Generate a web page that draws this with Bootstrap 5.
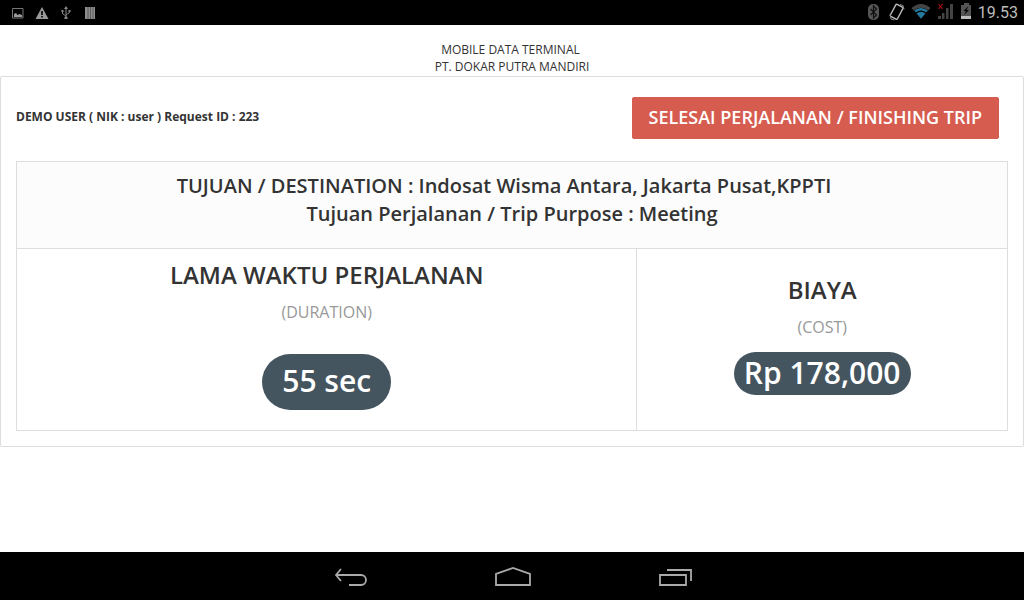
<!DOCTYPE html>
<html lang="id">
<head>
<meta charset="utf-8">
<meta name="viewport" content="width=device-width, initial-scale=1">
<title>Mobile Data Terminal</title>
<link href="https://cdn.jsdelivr.net/npm/bootstrap@5.3.0/dist/css/bootstrap.min.css" rel="stylesheet">
<style>
  body { font-family: "Open Sans", "Noto Sans", sans-serif; font-size: 12px; line-height: 17px; color: #333; }
  .status-bar { height: 25px; padding: 0 6px 0 10px; background: #000; }
  .clock { font-family: Roboto, sans-serif; font-size: 16px; line-height: 25px; color: #bdbdbd; }
  .nav-keys { height: 48px; padding: 4px 0 0 2px; background: #000; }
  .nav-keys .btn { width: 162px; }
  .terminal-title { padding-top: 16px; padding-bottom: 1px; }
  .trip-panel { border: 1px solid #ddd; border-radius: 2px; padding: 20px 15px 15px; }
  .trip-head { padding-right: 9px; margin-bottom: 22px; }
  .trip-head strong { padding-bottom: 4px; }
  .btn-finish { --bs-btn-color: #fff; --bs-btn-bg: #d65c4f; --bs-btn-border-color: #d65c4f; --bs-btn-hover-color: #fff; --bs-btn-hover-bg: #c94c3f; --bs-btn-hover-border-color: #c94c3f;
    font-size: 18px; line-height: 24px; font-weight: 600; padding: 7px 16px 9px; border-radius: 2px; }
  .trip-table { --bs-table-color: #333; border-color: #ddd; table-layout: fixed; }
  .trip-table > thead th { font-size: 20px; line-height: 28px; font-weight: 600; padding: 10px 8px 20px; background: #fcfcfc; }
  .trip-table > tbody td { padding: 8px 8px 20px; }
  .duration-col { width: 62.6%; }
  .trip-table h2 { font-size: 24px; line-height: 36px; font-weight: 600; margin: 0; }
  .caption-en { font-size: 16px; line-height: 24px; color: #999; margin: 7px 0 0; }
  .pill { display: inline-block; background: #455560; color: #fff; font-size: 30px; font-weight: 600; vertical-align: top; }
  .pill-lg { line-height: 36px; padding: 9px 20px 11px; margin-top: 30px; border-radius: 28px; }
  .pill-sm { line-height: 41px; padding: 0 10px 2px; margin-top: 13px; border-radius: 22px; }
</style>
</head>
<body class="d-flex flex-column min-vh-100 bg-white">
<header class="status-bar d-flex align-items-center justify-content-between">
  <div class="d-flex align-items-center gap-2">
    <svg width="16" height="16" viewBox="0 0 16 16" aria-hidden="true"><path d="M2.500 3.500h10.500v9.500H2.500z" fill="none" stroke="#777"/><path d="M4 9l2-1 1.500 2 2-1 2.500 1v2H4z" fill="#999"/></svg>
    <svg width="16" height="16" viewBox="0 0 16 16" aria-hidden="true"><path d="M8 2l6.500 12h-13z" fill="#999"/><path d="M7.200 6h1.600v4H7.200zM7.200 11h1.600v1.500H7.200z" fill="#000"/></svg>
    <svg width="16" height="16" viewBox="0 0 16 16" aria-hidden="true" fill="none" stroke="#888"><path d="M8 4v9M4.500 6v2c0 2 3.500 1.500 3.500 4M11.500 6v1c0 2-3.500 1.500-3.500 3.500"/><path d="M8 1l2 3H6zM3.500 5h2v2h-2zM10.500 5h2v2h-2zM6.500 12h3v2h-3z" fill="#888" stroke="none"/></svg>
    <svg width="16" height="16" viewBox="0 0 16 16" aria-hidden="true"><path d="M3 2h10v12H3z" fill="#8e8e8e"/><path d="M6 2v12M8.500 2v12M11 2v12" stroke="#444" stroke-width=".7"/></svg>
  </div>
  <div class="d-flex align-items-center">
    <svg width="112" height="25" viewBox="866 0 112 25" aria-hidden="true">
      <rect x="868" y="4" width="11" height="16" rx="5" fill="#555"/>
      <path d="M870.500 9l6 6-3 3V6l3 3-6 6" fill="none" stroke="#111" stroke-width="1.200"/>
      <rect x="892.500" y="5" width="8" height="13.500" rx="1" fill="none" stroke="#bbb" stroke-width="1.400" transform="rotate(28 896.500 12)"/>
      <path d="M900 4.500l3 1 1 4M890 14l1 5 3.500 1" fill="none" stroke="#888"/>
      <path d="M911.500 8q9.500-8 19 0l-2.200 2.600q-7.300-5.600-14.600 0z" fill="#444"/>
      <path d="M914.200 10.600q6.800-5.400 13.600 0l-1.700 2q-5.100-4-10.200 0z" fill="#24799d"/>
      <path d="M916.400 13.200q4.600-3.600 9.200 0l-4.600 5.600z" fill="#24799d"/>
      <path d="M916 13.300q5-3.900 10 0" fill="none" stroke="#000" stroke-width=".8"/>
      <path d="M938 16h3v3h-3zM942 13h2.500v6H942zM946 8h2.500v11H946zM950 4h3v15h-3z" fill="#444"/>
      <path d="M938.500 4l4 5M942.500 4l-4 5" stroke="#a11" stroke-width="1.200"/>
      <path d="M964 3h5v2h2v14h-10V5h3z" fill="#555"/>
      <path d="M961 16h10v3h-10z" fill="#bbb"/>
      <path d="M968.500 6l-5 5h2.500l-2 4 5-5h-2.500z" fill="#000"/>
    </svg>
    <time class="clock">19.53</time>
  </div>
</header>

<main class="flex-grow-1">
  <div class="terminal-title text-center">MOBILE DATA TERMINAL&nbsp;<br>PT. DOKAR PUTRA MANDIRI</div>
  <section class="trip-panel">
    <div class="trip-head d-flex align-items-center justify-content-between">
      <strong>DEMO USER ( NIK : user ) Request ID : 223</strong>
      <button type="button" class="btn btn-finish">SELESAI PERJALANAN / FINISHING TRIP</button>
    </div>
    <table class="table table-bordered trip-table text-center mb-0">
      <colgroup><col class="duration-col"><col></colgroup>
      <thead>
        <tr><th colspan="2"><span class="me-3">TUJUAN / DESTINATION : Indosat Wisma Antara, Jakarta Pusat,KPPTI</span><br>Tujuan Perjalanan / Trip Purpose : Meeting</th></tr>
      </thead>
      <tbody>
        <tr>
          <td>
            <h2>LAMA WAKTU PERJALANAN</h2>
            <p class="caption-en">(DURATION)</p>
            <span class="pill pill-lg">55 sec</span>
          </td>
          <td class="align-middle">
            <h2>BIAYA</h2>
            <p class="caption-en">(COST)</p>
            <span class="pill pill-sm">Rp 178,000</span>
          </td>
        </tr>
      </tbody>
    </table>
  </section>
</main>

<nav class="nav-keys d-flex justify-content-center align-items-center" aria-label="System">
  <button type="button" class="btn p-0 border-0" aria-label="Back"><svg width="36" height="24" viewBox="0 0 36 24" fill="none" stroke="#aaa" stroke-width="1.800"><path d="M8 2L3 8l5 6M3 8h25a4.800 4.800 0 0 1 0 10H16"/></svg></button>
  <button type="button" class="btn p-0 border-0" aria-label="Home"><svg width="38" height="24" viewBox="0 0 38 24" fill="none" stroke="#aaa" stroke-width="1.800"><path d="M2 18V7l17-6 17 6v11z"/></svg></button>
  <button type="button" class="btn p-0 border-0" aria-label="Recent apps"><svg width="36" height="24" viewBox="0 0 36 24" fill="none" stroke="#aaa" stroke-width="1.800"><path d="M3 8h26v10H3zM10 3h24v11"/></svg></button>
</nav>
<script src="https://cdn.jsdelivr.net/npm/bootstrap@5.3.0/dist/js/bootstrap.bundle.min.js"></script>
</body>
</html>
